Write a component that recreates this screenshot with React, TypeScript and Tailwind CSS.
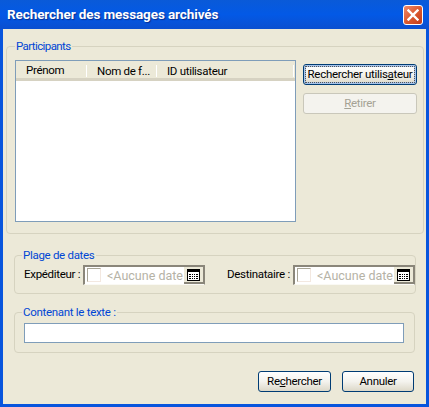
export default function App() {
  const font = "font-['Roboto','Liberation_Sans',sans-serif] text-[11.5px] tracking-[-0.3px]";
  const legend = "px-[1px] text-[#0046d5] leading-[13px] text-[11.5px]";
  const fieldset = "rounded-[4px] border border-[#d6d3c0]";
  const btn = "flex items-center justify-center rounded-[3px] border border-[#003c74] bg-gradient-to-b from-white via-[#f4f3ee] to-[#dcd8c8] text-black text-[11.5px] leading-none";

  const Picker = () => (
    <div className="w-[122px] h-[20px] flex items-stretch bg-white border-t-2 border-l-2 border-r border-[#8a867a] border-b border-b-[#faf9f4] overflow-hidden">
      <span className="ml-[2px] mt-[1px] w-[14px] h-[14px] border-l border-t border-[#a8a596] border-r border-b border-r-[#f3e8e0] border-b-[#f3e8e0] bg-white shrink-0" />
      <span className="ml-[6px] w-[77px] whitespace-nowrap text-[#b5b2a6] text-[12.5px] tracking-normal leading-[18px]">&lt;Aucune date</span>
      <span className="w-[20px] flex items-center justify-center bg-[#ece9d8] border-b-2 border-r border-[#8a867a] shrink-0">
        <svg width="13" height="12" viewBox="0 0 13 12">
          <rect x="0.5" y="0.5" width="12" height="11" fill="#fff" stroke="#000" />
          <rect x="0" y="0" width="13" height="3" fill="#000" />
          <path d="M2 5h2v1H2zM5 5h1v1H5zM7 5h1v1H7zM9 5h2v1H9zM2 7h2v1H2zM5 7h1v1H5zM7 7h1v1H7zM9 7h2v1H9zM2 9h2v1H2zM5 9h1v1H5zM7 9h1v1H7zM9 9h2v1H9z" fill="#000" />
        </svg>
      </span>
    </div>
  );

  return (
    <div className={`w-[429px] h-[407px] flex flex-col bg-[#0855dd] overflow-hidden ${font}`}>
      <div className="h-[29px] shrink-0 flex items-center justify-between pl-[7px] pr-[6px] bg-gradient-to-b from-[#0a5ad8] via-[#0359e6] to-[#0a4fd0]">
        <span className="text-white font-bold text-[13.5px] tracking-[-0.1px] [text-shadow:1px_1px_1px_#0a2f90] whitespace-nowrap">Rechercher des messages archivés</span>
        <span className="w-[20px] h-[20px] rounded-[3px] border border-white bg-gradient-to-br from-[#ef8a6a] via-[#dc5a30] to-[#c23a1a] flex items-center justify-center">
          <svg width="12" height="12" viewBox="0 0 12 12"><path d="M1.5 1.5l9 9M10.5 1.5l-9 9" stroke="#fff" strokeWidth="2.4" strokeLinecap="square" /></svg>
        </span>
      </div>
      <div className="flex-1 mx-[3px] mb-[3px] bg-[#ece9d8] flex flex-col">
        <fieldset className={`${fieldset} ml-[3px] mr-[3px] mt-[11px] h-[194px] pl-[8px] pr-[6px] flex`}>
          <legend className={`${legend} tracking-[-0.6px]`}>Participants</legend>
          <div className="flex items-start">
            <div className="w-[281px] h-[162px] mt-[7px] border border-[#7f9db9] bg-white flex flex-col">
              <div className="h-[20px] flex items-center pt-[3px] bg-[#ece9d8] border-b-[3px] border-[#d6d2c2] text-black">
                <span className="w-[70px] pl-[10px]">Prénom</span>
                <span className="w-[70px] pl-[10px] border-l border-white leading-[12px]">Nom de f...</span>
                <span className="flex-1 pl-[10px] border-l border-white leading-[12px]">ID utilisateur</span>
                <span className="h-[12px] mr-[1px] border-l border-white" />
              </div>
            </div>
            <div className="ml-[7px] mt-[11px] w-[114px] flex flex-col gap-[8px]">
              <button className={`${btn} h-[21px] border-[#003c74] outline-1 outline-dotted outline-offset-[-3px] outline-[#555] shadow-[inset_0_0_0_2px_#a8c4ea] whitespace-nowrap`}>
                Rechercher utilis<u>a</u>teur
              </button>
              <button className="h-[21px] rounded-[3px] border border-[#c9c7ba] bg-[#f4f3ee] text-[#a5a294] text-[11.5px] leading-none">
                <u>R</u>etirer
              </button>
            </div>
          </div>
        </fieldset>

        <fieldset className={`${fieldset} ml-[11px] mr-[11px] mt-[15px] h-[45px] pl-[9px] pr-0`}>
          <legend className={`${legend} -ml-[2px]`}>Plage de dates</legend>
          <div className="flex items-center mt-[3px] text-black">
            <span className="w-[59px] whitespace-nowrap">Expéditeur :</span>
            <Picker />
            <span className="ml-[22px] w-[66px] whitespace-nowrap">Destinataire :</span>
            <Picker />
          </div>
        </fieldset>

        <fieldset className={`${fieldset} ml-[11px] mr-[11px] mt-[12px] h-[47px] pl-[9px] pr-[10px]`}>
          <legend className={`${legend} -ml-[2px]`}>Contenant le texte :</legend>
          <div className="h-[20px] mt-[4px] border border-[#7f9db9] bg-white" />
        </fieldset>

        <div className="flex justify-end gap-[11px] mt-[18px] mr-[12px]">
          <button className={`${btn} w-[73px] h-[21px]`}>Re<u>c</u>hercher</button>
          <button className={`${btn} w-[72px] h-[21px]`}>Annuler</button>
        </div>
      </div>
    </div>
  );
}
